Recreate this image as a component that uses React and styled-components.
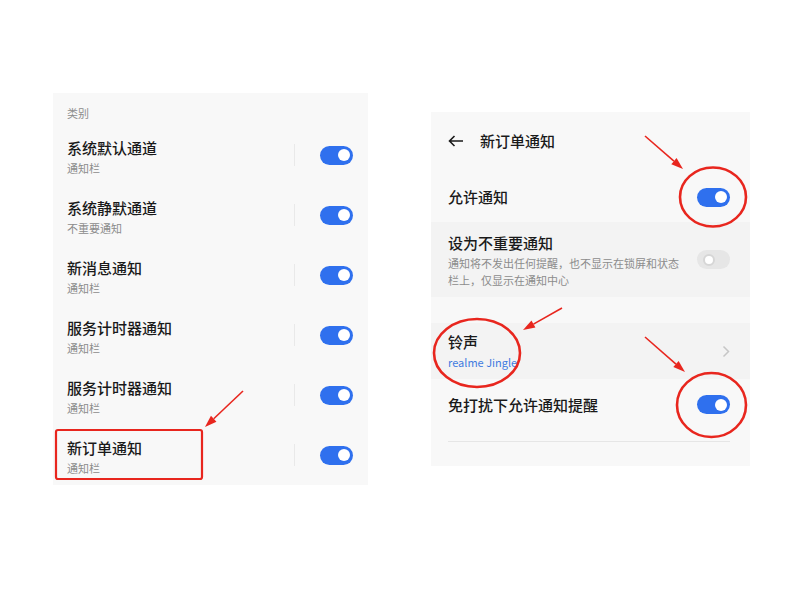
import React from 'react'
import styled, { createGlobalStyle } from 'styled-components'

const GlobalStyle = createGlobalStyle`
body {
  margin: 0;
  background: #ffffff;
  font-family: "Noto Sans CJK SC", "Noto Sans", sans-serif;
}
`

const Page = styled.main`
position: relative;
width: 800px;
height: 600px;
display: flex;
align-items: flex-start;
gap: 63px;
padding: 93px 0 0 53px;
box-sizing: border-box;
`

const Panel = styled.section`
width: ${p => p.$w}px;
margin-top: ${p => p.$top || 0}px;
background: #f8f8f8;
display: flex;
flex-direction: column;
`

const Category = styled.div`
height: 32px;
padding: 12px 0 0 14px;
box-sizing: border-box;
font-size: 11px;
line-height: 16px;
color: #8c8c8c;
`

const Row = styled.div`
display: flex;
align-items: center;
height: ${p => p.$h || 60}px;
padding: 0 ${p => p.$pr || 15}px 0 ${p => p.$pl || 14}px;
box-sizing: border-box;
background: ${p => p.$shade ? '#f3f3f3' : 'transparent'};
`

const Texts = styled.div`
flex: 1;
display: flex;
flex-direction: column;
align-self: flex-start;
padding-top: ${p => p.$pt || 13}px;
`

const Title = styled.div`
font-size: 15px;
font-weight: 500;
line-height: 20px;
color: #1a1a1a;
`

const Sub = styled.div`
margin-top: 2px;
font-size: 11px;
line-height: 17px;
color: ${p => p.$blue ? '#3f7be0' : '#8c8c8c'};
max-width: ${p => p.$max ? p.$max + 'px' : 'none'};
`

const Divider = styled.div`
width: 1px;
height: 22px;
background: #e9e9e9;
margin-right: 25px;
`

const Track = styled.div`
width: 33px;
height: 19px;
border-radius: 10px;
background: ${p => p.$on ? '#2f70ee' : '#e6e6e6'};
display: flex;
align-items: center;
justify-content: ${p => p.$on ? 'flex-end' : 'flex-start'};
padding: 0 3px;
box-sizing: border-box;
`

const Knob = styled.div`
width: 12px;
height: 12px;
border-radius: 50%;
box-sizing: border-box;
background: #ffffff;
border: ${p => p.$on ? 'none' : '2.5px solid #d6d6d6'};
margin-left: ${p => p.$on ? 0 : 3}px;
`

const Header = styled.div`
height: 60px;
display: flex;
align-items: center;
padding: 0 0 2px 17px;
box-sizing: border-box;
gap: 16px;
`

const Gap = styled.div`
height: 26px;
`

const Line = styled.div`
height: 1px;
background: #e6e6e6;
margin: 11px 20px 24px 17px;
`

const Overlay = styled.svg`
position: absolute;
left: 0;
top: 0;
pointer-events: none;
`

function Toggle ({ on = true }) {
  return (
    <Track $on={on}>
      <Knob $on={on} />
    </Track>
  )
}

const channels = [
  ['系统默认通道', '通知栏'],
  ['系统静默通道', '不重要通知'],
  ['新消息通知', '通知栏'],
  ['服务计时器通知', '通知栏'],
  ['服务计时器通知', '通知栏'],
  ['新订单通知', '通知栏']
]

function Arrow ({ x1, y1, x2, y2 }) {
  const a = Math.atan2(y2 - y1, x2 - x1)
  const len = 12
  const w = 4
  const bx = x2 - len * Math.cos(a)
  const by = y2 - len * Math.sin(a)
  const px = -Math.sin(a) * w
  const py = Math.cos(a) * w
  return (
    <g>
      <line x1={x1} y1={y1} x2={bx} y2={by} stroke='#e8261e' strokeWidth='1.6' />
      <polygon points={`${x2},${y2} ${bx + px},${by + py} ${bx - px},${by - py}`} fill='#e8261e' />
    </g>
  )
}

export default function App () {
  return (
    <>
      <GlobalStyle />
      <Page>
        <Panel $w={315}>
          <Category>类别</Category>
          {channels.map(([t, s], i) => (
            <Row key={i}>
              <Texts>
                <Title>{t}</Title>
                <Sub>{s}</Sub>
              </Texts>
              <Divider />
              <Toggle />
            </Row>
          ))}
        </Panel>

        <Panel $w={319} $top={19}>
          <Header>
            <svg width='16' height='12' viewBox='0 0 16 12'>
              <path d='M15 6H1.5M6.5 1 1.5 6l5 5' fill='none' stroke='#1a1a1a' strokeWidth='1.6' />
            </svg>
            <Title>新订单通知</Title>
          </Header>
          <Row $h={50} $pl={17} $pr={20}>
            <Texts $pt={15}>
              <Title>允许通知</Title>
            </Texts>
            <Toggle />
          </Row>
          <Row $h={75} $shade $pl={17} $pr={20}>
            <Texts $pt={11}>
              <Title>设为不重要通知</Title>
              <Sub $max={232}>通知将不发出任何提醒，也不显示在锁屏和状态栏上，仅显示在通知中心</Sub>
            </Texts>
            <Toggle on={false} />
          </Row>
          <Gap />
          <Row $h={56} $shade $pl={17} $pr={20}>
            <Texts $pt={9}>
              <Title>铃声</Title>
              <Sub $blue>realme Jingle</Sub>
            </Texts>
            <svg width='8' height='13' viewBox='0 0 8 13'>
              <path d='M1.5 1.5 6.5 6.5 1.5 11.5' fill='none' stroke='#c6c6c6' strokeWidth='1.5' />
            </svg>
          </Row>
          <Row $h={51} $pl={17} $pr={20}>
            <Texts $pt={16}>
              <Title>免打扰下允许通知提醒</Title>
            </Texts>
            <Toggle />
          </Row>
          <Line />
        </Panel>

        <Overlay width='800' height='600' viewBox='0 0 800 600'>
          <rect x='56' y='430' width='146' height='49' rx='2' fill='none' stroke='#e8261e' strokeWidth='2.2' />
          <Arrow x1={243} y1={391} x2={205} y2={427} />
          <ellipse cx='713' cy='197' rx='33' ry='29.5' fill='none' stroke='#e8261e' strokeWidth='2.6' />
          <Arrow x1={645} y1={136} x2={683} y2={169} />
          <ellipse cx='477' cy='353' rx='43' ry='34' fill='none' stroke='#e8261e' strokeWidth='2.6' />
          <Arrow x1={562} y1={308} x2={523} y2={330} />
          <ellipse cx='711.5' cy='405' rx='34.5' ry='32' fill='none' stroke='#e8261e' strokeWidth='2.6' />
          <Arrow x1={645} y1={337} x2={685} y2={372} />
        </Overlay>
      </Page>
    </>
  )
}
